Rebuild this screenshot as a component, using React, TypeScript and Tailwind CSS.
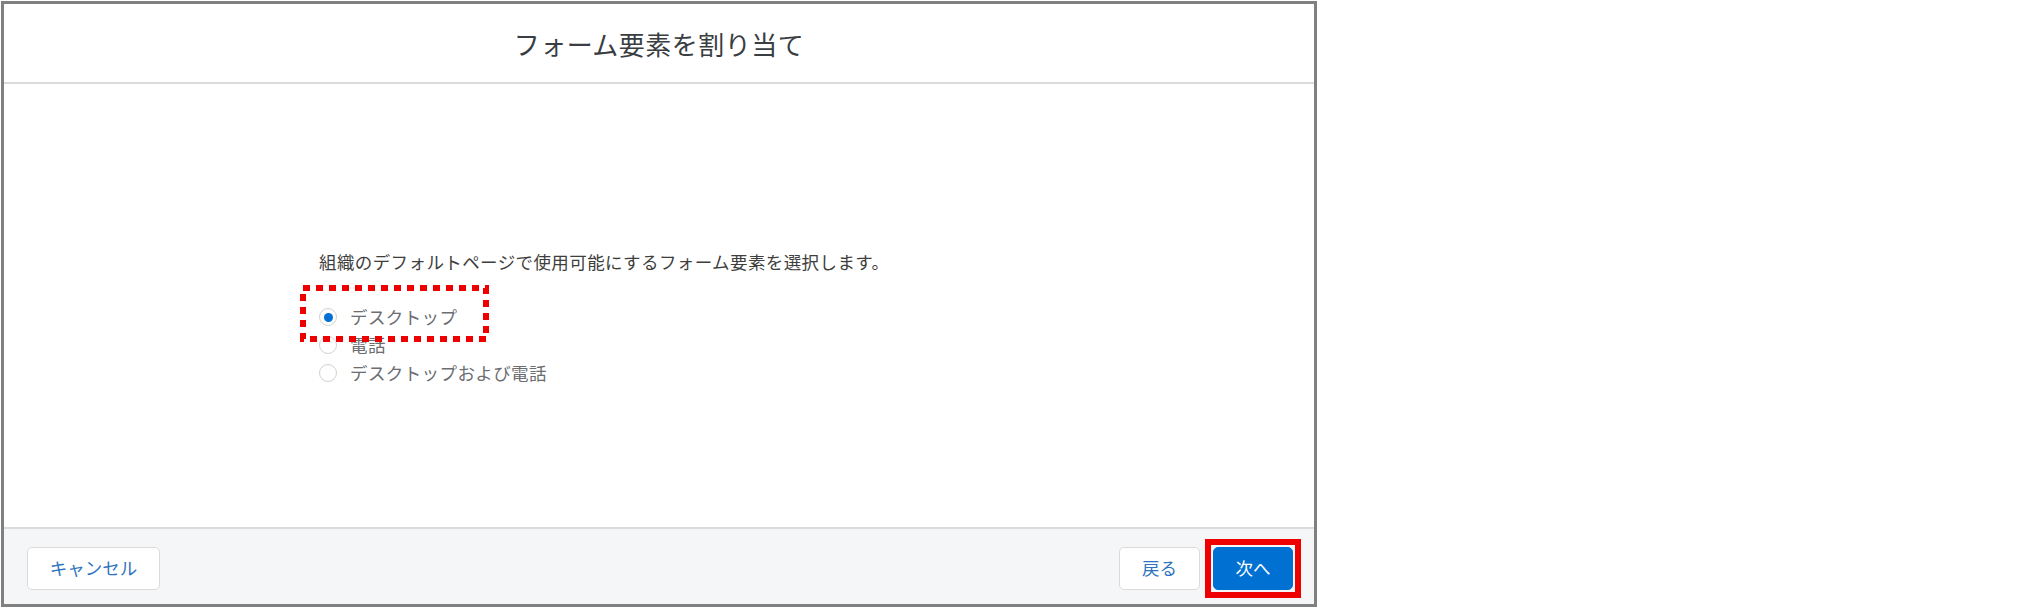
const font = "font-['Noto_Sans_CJK_JP','Noto_Sans',sans-serif]";

const options = [
  { label: "デスクトップ", checked: true },
  { label: "電話", checked: false },
  { label: "デスクトップおよび電話", checked: false },
];

function Radio({ checked }: { checked: boolean }) {
  return (
    <span className="flex h-[18px] w-[18px] shrink-0 items-center justify-center rounded-full border border-[#d4d2d0] bg-white">
      {checked && <span className="h-[9px] w-[9px] rounded-full bg-[#0070d2]" />}
    </span>
  );
}

export default function App() {
  return (
    <div className={`relative h-[615px] w-[2027px] bg-white ${font}`}>
      <div className="ml-[1px] mt-[1px] flex h-[606px] w-[1316px] flex-col border-[3px] border-[#808080] bg-white">
        {/* header */}
        <div className="flex h-[80px] shrink-0 items-center justify-center border-b-2 border-[#dddbda]">
          <h2 className="text-[26px] font-normal tracking-[0.5px] text-[#3a3d42]">
            フォーム要素を割り当て
          </h2>
        </div>

        {/* body */}
        <div className="flex-1 pl-[315px] pt-[165px]">
          <p className="text-[17.5px] leading-[26px] tracking-[0.4px] text-[#3e3e3c]">
            組織のデフォルトページで使用可能にするフォーム要素を選択します。
          </p>
          <div className="relative mt-[28px] flex flex-col">
            {options.map((o) => (
              <label key={o.label} className="flex h-[28px] items-center gap-[13px]">
                <Radio checked={o.checked} />
                <span className="text-[17.5px] tracking-[0.4px] text-[#6b6d70]">{o.label}</span>
              </label>
            ))}
            {/* annotation */}
            <svg
              className="pointer-events-none absolute left-[-19px] top-[-18px]"
              width="189"
              height="57"
              viewBox="0 0 189 57"
            >
              <rect
                x="3"
                y="3"
                width="183"
                height="51"
                fill="none"
                stroke="#ee0000"
                strokeWidth="6"
                strokeDasharray="7 6"
              />
            </svg>
          </div>
        </div>

        {/* footer */}
        <div className="flex h-[77px] shrink-0 items-start justify-between border-t-2 border-[#dddbda] bg-[#f5f6f8] pl-[23px] pr-[21px] pt-[18px]">
          <button className="h-[43px] w-[133px] rounded-[5px] border border-[#dddbda] bg-white text-[17.5px] text-[#2f74c0]">
            キャンセル
          </button>
          <div className="flex gap-[13px]">
            <button className="h-[43px] w-[81px] rounded-[5px] border border-[#dddbda] bg-white text-[17.5px] text-[#2f74c0]">
              戻る
            </button>
            <div className="relative">
              <button className="h-[43px] w-[80px] rounded-[5px] border border-[#0070d2] bg-[#0070d2] text-[17.5px] text-white">
                次へ
              </button>
              <div className="pointer-events-none absolute -inset-[8px] border-[6px] border-[#ee0000]" />
            </div>
          </div>
        </div>
      </div>
    </div>
  );
}
